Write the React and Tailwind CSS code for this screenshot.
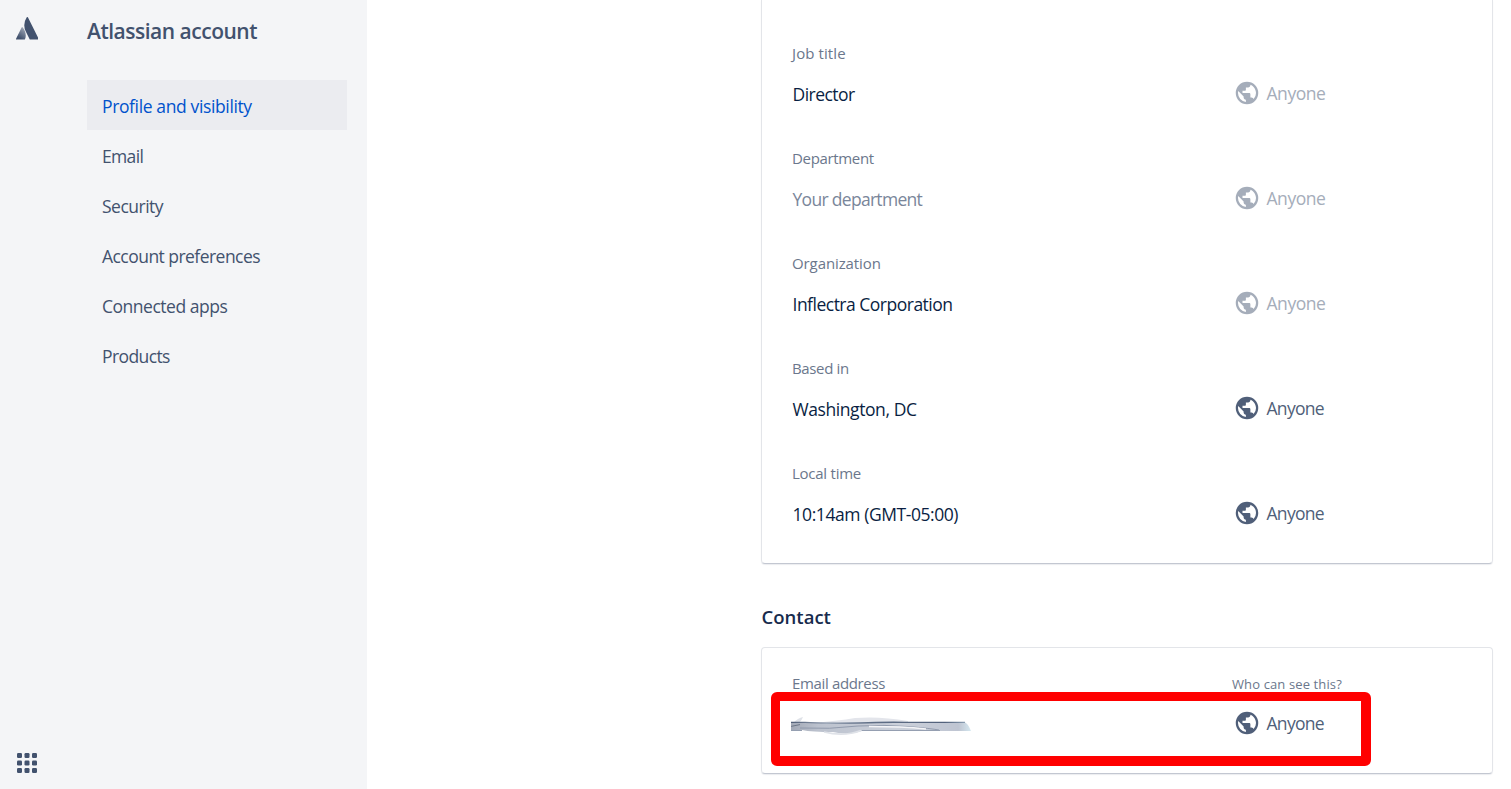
const NAV = [
  { label: 'Profile and visibility', tracking: 'tracking-[-0.37px]', active: true },
  { label: 'Email', tracking: 'tracking-[-0.67px]' },
  { label: 'Security', tracking: 'tracking-[-0.5px]' },
  { label: 'Account preferences', tracking: 'tracking-[-0.54px]' },
  { label: 'Connected apps', tracking: 'tracking-[-0.48px]' },
  { label: 'Products', tracking: 'tracking-[-0.6px]' },
];

const FIELDS = [
  { label: 'Job title', labelTracking: 'tracking-[0.1px]', value: 'Director', tracking: 'tracking-[-0.53px]', locked: true },
  { label: 'Department', labelTracking: 'tracking-[-0.33px]', value: 'Your department', tracking: 'tracking-[-0.7px]', locked: true, empty: true },
  { label: 'Organization', labelTracking: 'tracking-[-0.1px]', value: 'Inflectra Corporation', tracking: 'tracking-[-0.5px]', locked: true },
  { label: 'Based in', labelTracking: 'tracking-[-0.36px]', value: 'Washington, DC', tracking: 'tracking-[-0.42px]' },
  { label: 'Local time', labelTracking: 'tracking-[-0.25px]', value: '10:14am (GMT-05:00)', tracking: 'tracking-[-0.43px]' },
];

function AtlassianLogo() {
  return (
    <svg viewBox="0 0 24 24" className="h-[22.6px] w-[22.6px]">
      <defs>
        <linearGradient id="leg" x1="0.8" y1="0" x2="0.35" y2="0.85">
          <stop offset="0" stopColor="#42526e" stopOpacity="0.45" />
          <stop offset="1" stopColor="#42526e" />
        </linearGradient>
      </defs>
      <path
        fill="url(#leg)"
        d="M7.12 11.084a.683.683 0 0 0-1.16.126L.075 22.974a.703.703 0 0 0 .63 1.018h8.19a.678.678 0 0 0 .63-.39c1.767-3.65.696-9.203-2.406-12.52z"
      />
      <path
        fill="#42526e"
        d="M11.434.386a15.515 15.515 0 0 0-.906 15.317l3.95 7.9a.703.703 0 0 0 .628.388h8.19a.703.703 0 0 0 .63-1.017L12.63.38a.664.664 0 0 0-1.196.006z"
      />
    </svg>
  );
}

function AppSwitcherIcon() {
  return (
    <svg viewBox="0 0 20 20" className="h-5 w-5" fill="#42526e">
      {[0, 7.5, 15].map((y) =>
        [0, 7.5, 15].map((x) => <rect key={`${x}-${y}`} x={x} y={y} width="5" height="5" rx="1.2" />)
      )}
    </svg>
  );
}

function Visibility({ locked }) {
  return (
    <div className={`flex h-[30px] items-center ${locked ? 'text-[#a5adba]' : 'text-[#505f79]'}`}>
      <svg viewBox="0 0 24 24" className="-ml-px h-[30px] w-[30px]" fill="currentColor">
        <path d="M12 21a9 9 0 1 0 0-18 9 9 0 0 0 0 18zm-.9-1.863A7.19 7.19 0 0 1 4.8 12c0-.558.068-1.089.189-1.611L9.3 14.7v.9c0 .99.81 1.8 1.8 1.8v1.737zm6.21-2.286a1.786 1.786 0 0 0-1.71-1.251h-.9v-2.7c0-.495-.405-.9-.9-.9H8.4v-1.8h1.8c.495 0 .9-.405.9-.9V7.5h1.8c.99 0 1.8-.81 1.8-1.8v-.369c2.637 1.071 4.5 3.654 4.5 6.669a7.17 7.17 0 0 1-1.89 4.851z" />
      </svg>
      <span className={`ml-[4.5px] pt-px text-[17.5px] ${locked ? 'tracking-[-0.45px]' : 'tracking-[-0.7px]'}`}>
        Anyone
      </span>
    </div>
  );
}

function Field({ label, labelTracking, value, tracking, locked, empty }) {
  return (
    <div className="flex h-[105px]">
      <div className="w-[441px]">
        <div className={`h-[26px] text-[15px] leading-[24px] text-[#6b778c] ${labelTracking}`}>{label}</div>
        <div
          className={`mt-[13px] ml-[0.5px] h-[30px] text-[17.5px] leading-[28px] ${tracking} ${
            empty ? 'text-[#7a869a]' : 'text-[#091e42]'
          }`}
        >
          {value}
        </div>
      </div>
      <div className="pt-[37px]">
        <Visibility locked={locked} />
      </div>
    </div>
  );
}

function Smudge() {
  return (
    <svg viewBox="0 0 182 20" className="h-5 w-[182px] blur-[0.5px]">
      <defs>
        <linearGradient id="smudge" x1="0" x2="1">
          <stop offset="0" stopColor="#a3a9b6" />
          <stop offset="0.15" stopColor="#bcc2ce" />
          <stop offset="0.6" stopColor="#cbd0da" />
          <stop offset="0.93" stopColor="#bfc5d2" />
          <stop offset="1" stopColor="#d5e8f0" />
        </linearGradient>
        <linearGradient id="topEdge" gradientUnits="userSpaceOnUse" x1="0" x2="182" y1="0" y2="0">
          <stop offset="0" stopColor="#4c5a73" />
          <stop offset="0.2" stopColor="#9aa5b6" />
          <stop offset="0.45" stopColor="#5f6e86" />
          <stop offset="0.85" stopColor="#52617b" />
          <stop offset="1" stopColor="#9fb4c6" />
        </linearGradient>
      </defs>
      <path d="M3 7 Q8 2 13 1 Q12 4 9 7Z" fill="#dfe2e8" />
      <path d="M20 7 Q48 5 65 2 Q90 0 118 5 L118 8 H20Z" fill="#e3e5eb" />
      <path d="M1 6 H174 Q178 7 181 15 H72 Q58 20 43 16 Q22 16 12 14 H1Z" fill="url(#smudge)" />
      <path d="M34 16 Q54 21 71 14.5" fill="none" stroke="#dfe2e8" strokeWidth="1.6" />
      <path d="M1 6.4 H15 Q40 8 70 7 Q90 6 115 6.3 H175" fill="none" stroke="url(#topEdge)" strokeWidth="1.3" />
      <path d="M10 12 Q40 13.5 68 10 Q95 8.5 118 10.5 T149 14" fill="none" stroke="#8b95a8" strokeWidth="0.9" />
      <path d="M79 10.6 Q112 10.6 136 13" fill="none" stroke="#f5f5f8" strokeWidth="1.5" />
      <path d="M1 14.5 H12 M72 14.5 H150" stroke="#959fb1" strokeWidth="1" />
      <path d="M1 10.4 L10 8.6" stroke="#6e7787" strokeWidth="1" />
    </svg>
  );
}

export default function App() {
  return (
    <div className="flex h-[789px] w-[1511px] overflow-hidden bg-white font-['Open_Sans','Noto_Sans',sans-serif]">
      <aside className="flex w-[367px] bg-[#f4f5f7]">
        <div className="flex w-[87px] flex-col justify-between pt-[17px] pb-4 pl-[15.5px]">
          <AtlassianLogo />
          <div className="pl-[1.5px]">
            <AppSwitcherIcon />
          </div>
        </div>
        <div className="w-[260px] pt-[15px]">
          <h1 className="h-[30px] text-[21px] leading-[32px] font-semibold tracking-[-0.49px] whitespace-nowrap text-[#42526e]">
            Atlassian account
          </h1>
          <nav className="mt-[35px]">
            {NAV.map((item) => (
              <a
                key={item.label}
                className={`flex h-[50px] items-center pt-[3px] pl-[15px] text-[17.5px] ${item.tracking} ${
                  item.active ? 'bg-[#ebecf0] text-[#0052cc]' : 'text-[#42526e]'
                }`}
              >
                {item.label}
              </a>
            ))}
          </nav>
        </div>
      </aside>

      <main className="pl-[394px]">
        <section className="h-[564px] w-[732px] rounded-b-[4px] border border-t-0 border-[#e3e5e9] border-b-[#c3c7d1] pt-[41px] pl-[30px] shadow-[0_1px_1px_rgba(9,30,66,0.08)]">
          {FIELDS.map((field) => (
            <Field key={field.label} {...field} />
          ))}
        </section>

        <h2 className="mt-[39px] ml-[0.5px] h-[29px] text-[18.5px] leading-[28px] font-semibold tracking-[0.02px] text-[#172b4d]">
          Contact
        </h2>

        <section className="relative mt-[15px] h-[127px] w-[732px] rounded-[4px] border border-[#e3e5e9] border-b-[#c3c7d1] pt-[23px] pl-[30px] shadow-[0_1px_1px_rgba(9,30,66,0.08)]">
          <div className="flex">
            <div className="w-[441px]">
              <div className="h-[26px] text-[15px] leading-[24px] tracking-[-0.35px] text-[#6b778c]">Email address</div>
              <div className="mt-[19px] -ml-[2px]">
                <Smudge />
              </div>
            </div>
            <div>
              <div className="-ml-px h-[26px] text-[13px] leading-[26px] tracking-[0.12px] whitespace-nowrap text-[#6b778c]">
                Who can see this?
              </div>
              <div className="mt-[11px]">
                <Visibility />
              </div>
            </div>
          </div>
          <div className="absolute top-[44px] left-[9px] h-[74px] w-[600px] rounded-[6px] border-t-9 border-r-10 border-b-10 border-l-9 border-[#ff0000]" />
        </section>
      </main>
    </div>
  );
}
